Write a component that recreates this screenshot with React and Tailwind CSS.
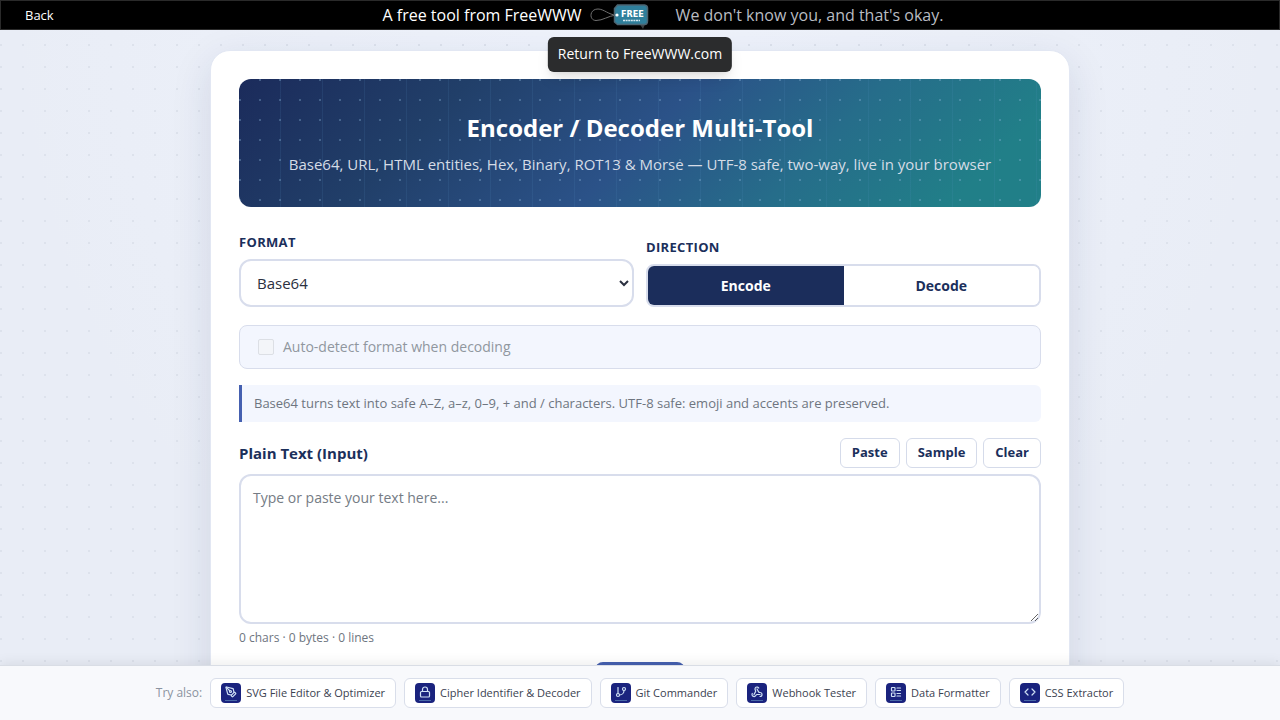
import React from "react";
import { PenTool, Lock, GitBranch, Webhook, LayoutList, Code } from "lucide-react";

const tools = [
  { name: "SVG File Editor & Optimizer", Icon: PenTool },
  { name: "Cipher Identifier & Decoder", Icon: Lock },
  { name: "Git Commander", Icon: GitBranch },
  { name: "Webhook Tester", Icon: Webhook },
  { name: "Data Formatter", Icon: LayoutList },
  { name: "CSS Extractor", Icon: Code },
];

function TagLogo() {
  return (
    <svg width="60" height="28" viewBox="0 0 60 28" aria-hidden="true">
      <path d="M26 14C19 14 14 8 8 8C-1 8 -1 19.500 6 19.500C13 19.500 18 15 26 14" fill="none" stroke="#707070" strokeWidth="1" />
      <path d="M28 23.500H50L53 28L55 23.500Z" fill="#3b3f42" />
      <path d="M27.500 4H54.500Q57.500 4.500 57.500 7V20Q57.500 23.500 54.500 23.500H27.500L24.500 21V7.500Z" fill="#2f7f9b" stroke="#4c6471" strokeWidth="1.500" />
      <circle cx="27" cy="14" r="1.600" fill="#fff" />
      <text x="31" y="16" fill="#fff" fontFamily="DejaVu Sans Condensed, Open Sans, sans-serif" fontWeight="700" fontSize="9">FREE</text>
      <path d="M33 19.500H50" stroke="#d5e8ef" strokeWidth="1.500" strokeDasharray="2 .6" />
    </svg>
  );
}

function SmallButton({ children }) {
  return (
    <button type="button" className="h-[30px] rounded-md border border-[#d5dbea] bg-white px-[11px] text-[13px] font-bold text-[#1b2f5b]">
      {children}
    </button>
  );
}

export default function App() {
  return (
    <div className="flex h-screen flex-col bg-[#e9edf6] bg-[radial-gradient(circle_at_1px_1px,#dde2ec_1px,transparent_1px),radial-gradient(ellipse_at_50%_0%,#eff3fc_0%,transparent_70%)] bg-[size:22px_22px,auto] font-['Open_Sans',sans-serif] text-[#2b3040]">
      <header className="relative z-20 grid h-[30px] shrink-0 grid-cols-[1fr_auto_1fr] items-center border border-[#2a2a2a] bg-black text-white">
        <a href="#back" className="pt-px pl-6 text-[13px]">Back</a>
        <div className="flex items-center gap-2 pl-[46px] text-base leading-6">
          <span>A free tool from FreeWWW</span>
          <a href="#home" aria-label="Return to FreeWWW.com"><TagLogo /></a>
          <span className="pl-[18px] text-[#b9bcc2]">We don't know you, and that's okay.</span>
        </div>
        <div role="tooltip" className="absolute top-9 left-1/2 -translate-x-1/2 rounded-md bg-[#2b2c2d] px-[10px] pt-[6px] pb-2 text-sm leading-[21px] whitespace-nowrap text-white shadow-lg">
          Return to FreeWWW.com
        </div>
      </header>

      <main className="min-h-0 flex-1 overflow-y-auto px-4 pt-5 [scrollbar-width:none]">
        <div className="mx-auto max-w-[860px] rounded-[20px] border border-[#e2e7f3] bg-white p-7 shadow-[0_12px_40px_rgba(27,45,91,0.12)]">
          <section className="rounded-xl bg-[radial-gradient(circle_at_1px_1px,rgba(140,180,215,0.35)_1px,transparent_1px),repeating-linear-gradient(90deg,transparent_0_41px,rgba(90,150,200,0.12)_41px_42px),linear-gradient(135deg,#1b2b5b_0%,#213f69_25%,#2b5288_50%,#266d8a_70%,#217f88_90%)] bg-[size:20px_20px,auto,auto] px-6 py-8 text-center text-white">
            <h1 className="text-2xl leading-[34px] font-bold">Encoder / Decoder Multi-Tool</h1>
            <p className="mt-2 text-[15px] leading-[22px] text-[#d5dce6]">
              Base64, URL, HTML entities, Hex, Binary, ROT13 &amp; Morse — UTF-8 safe, two-way, live in your browser
            </p>
          </section>

          <div className="mt-[25px] grid grid-cols-2 items-end gap-3">
            <div>
              <label htmlFor="format" className="block text-[13px] leading-5 font-bold tracking-wide text-[#1b2f5b]">FORMAT</label>
              <select id="format" className="mt-[7px] h-12 w-full rounded-xl border-2 border-[#d8ddec] bg-white px-3 text-[15px]">
                <option>Base64</option>
                <option>URL</option>
                <option>HTML entities</option>
                <option>Hex</option>
                <option>Binary</option>
                <option>ROT13</option>
                <option>Morse</option>
              </select>
            </div>
            <div role="group" aria-labelledby="direction">
              <div id="direction" className="text-[13px] leading-5 font-bold tracking-wide text-[#1b2f5b]">DIRECTION</div>
              <div className="mt-[7px] grid h-[43px] grid-cols-2 overflow-hidden rounded-lg border-2 border-[#d8ddec] text-sm font-bold">
                <button type="button" aria-pressed="true" className="bg-[#1b2d5b] text-white">Encode</button>
                <button type="button" aria-pressed="false" className="bg-white text-[#1b2f5b]">Decode</button>
              </div>
            </div>
          </div>

          <div className="mt-[18px] flex h-11 items-center gap-[9px] rounded-lg border border-[#d8ddec] bg-[#f3f6fe] px-[18px] text-sm text-[#90979f]">
            <input id="detect" type="checkbox" disabled className="size-4 appearance-none rounded-xs border border-[#dcdfe5] bg-[#f3f5f9]" />
            <label htmlFor="detect">Auto-detect format when decoding</label>
          </div>

          <p className="mt-4 rounded-r-md border-l-3 border-[#4560b0] bg-[#f3f6fe] px-3 py-2 text-[13px] leading-[21px] text-[#6e7580]">
            Base64 turns text into safe A–Z, a–z, 0–9, + and / characters. UTF-8 safe: emoji and accents are preserved.
          </p>

          <div className="mt-4 flex items-center justify-between">
            <label htmlFor="plain" className="text-[15px] font-bold text-[#1b2f5b]">Plain Text (Input)</label>
            <div className="flex gap-[6px]">
              <SmallButton>Paste</SmallButton>
              <SmallButton>Sample</SmallButton>
              <SmallButton>Clear</SmallButton>
            </div>
          </div>
          <textarea id="plain" placeholder="Type or paste your text here..." className="mt-[6px] block h-[150px] w-full resize-y rounded-xl border-2 border-[#d8ddec] bg-white p-3 text-sm leading-5 placeholder:text-[#757c85]" />
          <p className="mt-1 text-xs leading-5 text-[#6e7580]">0 chars · 0 bytes · 0 lines</p>
          <div className="mt-[14px] flex justify-center">
            <button type="button" aria-label="Swap" className="h-10 w-[90px] rounded-lg bg-[#4560b0]" />
          </div>
        </div>
      </main>

      <footer className="relative z-10 flex h-[55px] shrink-0 items-center justify-center gap-2 border-t border-[#d9dde5] bg-[#f8f9fc] text-xs shadow-[0_-2px_12px_rgba(0,0,0,0.08)]">
        <span className="text-[#8b93a0]">Try also:</span>
        {tools.map(({ name, Icon }) => (
          <a key={name} href="#tool" className="flex h-[30px] items-center gap-[5px] rounded-md border border-[#d9deea] bg-white px-[10px] text-[11px] whitespace-nowrap text-[#3b4250]">
            <span className="flex size-5 flex-col items-center justify-center gap-[2px] rounded-sm bg-[#1a237e] text-[#cfe0f4]">
              <Icon size={12} strokeWidth={2.4} />
              <span className="h-px w-3 bg-[#4a6aa8]" />
            </span>
            {name}
          </a>
        ))}
      </footer>
    </div>
  );
}
